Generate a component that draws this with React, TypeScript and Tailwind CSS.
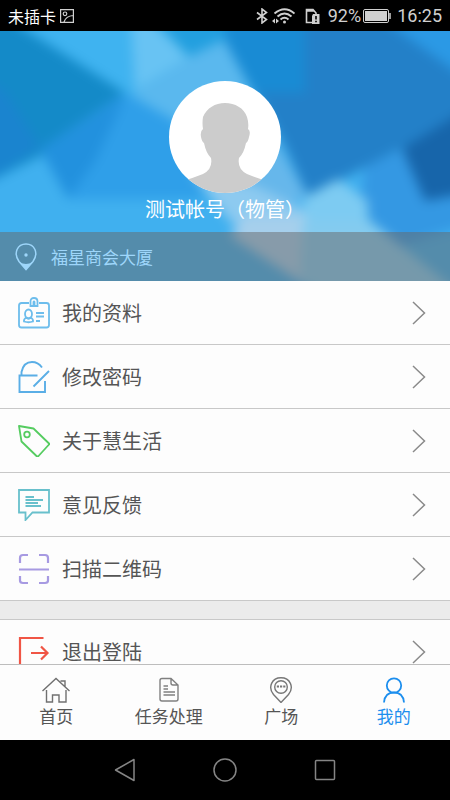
import { useState } from "react";
import type { ReactNode } from "react";

const icons: Record<string, ReactNode> = {
  profile: (
    <svg viewBox="0 0 32 32" className="size-8" fill="none" stroke="#6dbdec" strokeWidth="1.800">
      <path d="M11 6H3.500Q1 6 1 8.500V28Q1 30.500 3.500 30.500H28.500Q31 30.500 31 28V8.500Q31 6 28.500 6H21" />
      <path d="M12.500 9V4.500Q12.500 1 16 1T19.500 4.500V9ZM15.500 8V5Q16 4 16.500 5V8" />
      <ellipse cx="10.500" cy="17" rx="3.500" ry="4.500" />
      <path d="M8.500 20.500Q5.500 22 6 24.500Q10.500 26 15 24.500Q15.500 22 12.500 20.500Q10.500 22.500 8.500 20.500M18 16H26M18 19.500H26M18 24H22" />
    </svg>
  ),
  password: (
    <svg viewBox="0 0 32 32" className="size-8" fill="none" stroke="#5aaee6" strokeWidth="1.900">
      <path d="M19.500 14.500H1.500V31H27V20" />
      <path d="M3.500 14V11C5 4 9 1 14 1Q20 1 24 6.500M31 10L15.500 25.500" />
    </svg>
  ),
  about: (
    <svg viewBox="0 0 32 32" className="size-8" fill="none" stroke="#55cc60" strokeWidth="1.800" strokeLinejoin="round">
      <path d="M1 1L15.500 3.500L31 18.500Q31.500 19 31 19.500L20.500 31Q19.500 32 18.500 31L3.500 16.500Z" />
      <circle cx="9" cy="9.500" r="2.800" />
    </svg>
  ),
  feedback: (
    <svg viewBox="0 0 32 32" className="size-8" fill="none" stroke="#68c0cc" strokeWidth="1.800">
      <path d="M1 1H31V23.500H14.500L7.500 31V23.500H1Z" />
      <path d="M7.500 8H16M7.500 11H25M7.500 14H20M7.500 17H23" />
    </svg>
  ),
  scan: (
    <svg viewBox="0 0 32 32" className="size-8" fill="none" stroke="#a79ae2" strokeWidth="2.200">
      <path d="M2 10V5Q2 2 5 2H10M21 2H27Q30 2 30 5V10M2 23V27.500Q2 30 5 30H10M30 23V27.500Q30 30 27 30H21M1 16.500H31" />
    </svg>
  ),
  logout: (
    <svg viewBox="0 0 32 32" className="size-8" fill="none" stroke="#f05545" strokeWidth="2.200">
      <path d="M25.500 2H2V31H25.500M13 17H29M23 10.500L29.500 17L23 23.500" />
    </svg>
  ),
  home: (
    <svg viewBox="0 0 28 26" className="h-[26px] w-7" fill="none" stroke="#707070" strokeWidth="1.400">
      <path d="M0.500 14L14 1.500L27.500 14M4.500 13V25H10.500V18H17V25H24V13M18.500 4H23V9.500" />
    </svg>
  ),
  tasks: (
    <svg viewBox="0 0 28 26" className="h-[26px] w-7" fill="none" stroke="#808080" strokeWidth="1.400">
      <path d="M16 1.500H7Q5 1.500 5 3.500V22Q5 24 7 24H21Q23 24 23 22V8ZM16 1.500V6Q16 8 18 8H23M8.500 9H13M8.500 12H13M8.500 15H20M8.500 18H20" />
    </svg>
  ),
  square: (
    <svg viewBox="0 0 28 26" className="h-[26px] w-7" fill="none" stroke="#777777" strokeWidth="1.400">
      <path d="M14 25.500L6.500 17.500C0.500 10 5 0.800 14 0.800S27.500 10 21.500 17.500Z" />
      <circle cx="14" cy="10" r="6.300" />
      <path d="M9.800 9.500H12M13 9.500H15.200M16.200 9.500H18.400" strokeWidth="2" />
    </svg>
  ),
  mine: (
    <svg viewBox="0 0 28 26" className="h-[26px] w-7" fill="none" stroke="#1c8eee" strokeWidth="1.800">
      <circle cx="14" cy="8.500" r="7.200" />
      <path d="M4 25.500C4.500 19.500 8 15.500 14 15.500S23.500 19.500 24 25.500" />
    </svg>
  ),
};

const menuItems = [
  { id: "profile", label: "我的资料" },
  { id: "password", label: "修改密码" },
  { id: "about", label: "关于慧生活" },
  { id: "feedback", label: "意见反馈" },
  { id: "scan", label: "扫描二维码" },
];

const tabs = [
  { id: "home", label: "首页" },
  { id: "tasks", label: "任务处理" },
  { id: "square", label: "广场" },
  { id: "mine", label: "我的" },
];

function StatusBar() {
  return (
    <header className="flex h-[31px] shrink-0 items-center bg-black pl-2 pr-2 text-[#d0d0d0]">
      <span className="text-base text-white">未插卡</span>
      <svg viewBox="0 0 14 14" className="ml-1 size-3.5" fill="none" stroke="currentColor" strokeWidth="1.200">
        <path d="M0.600 0.600H13.400V13.400H0.600ZM4 13Q6 7 13 6.500" />
        <circle cx="5" cy="4.800" r="1.800" />
      </svg>
      <div className="ml-auto flex items-center">
        <svg viewBox="0 0 12 16" className="h-4 w-3" fill="none" stroke="currentColor" strokeWidth="1.600">
          <path d="M1 4.500L10.500 11.500L6 15V1L10.500 4.500L1 11.500" />
        </svg>
        <svg viewBox="0 0 23 16" className="ml-1 h-4 w-[23px]" fill="none" stroke="currentColor" strokeWidth="1.900">
          <path d="M2.500 5.500Q12.500 -3 22.500 5.500M5.500 8.500Q12.500 2.500 19.500 8.500M8.500 11.500Q12.500 8 16.500 11.500" />
          <circle cx="12.500" cy="14" r="1.500" fill="currentColor" stroke="none" />
          <path d="M0 13L3 10.500V15.500ZM7 13L4 10.500V15.500Z" fill="currentColor" stroke="none" />
        </svg>
        <svg viewBox="0 0 15 16" className="ml-2.5 h-4 w-[15px]" fill="none" stroke="currentColor" strokeWidth="1.600">
          <path d="M7 14.500H1.500V1.500H8L11 5V6M1 3H9" />
          <path d="M8 6H14.500V16H7V8Z" fill="currentColor" stroke="none" />
          <path d="M11 8V11.500M11 12.700V14.200" stroke="black" />
        </svg>
        <span className="ml-2 font-['Roboto',sans-serif] text-lg leading-none">92%</span>
        <svg viewBox="0 0 28 14" className="ml-0.5 h-3.5 w-7" fill="none" stroke="currentColor">
          <rect x="0.500" y="0.500" width="25" height="13" rx="1.500" />
          <rect x="2" y="2" width="22" height="10" fill="currentColor" stroke="none" />
          <path d="M27 4V10" strokeWidth="1.500" />
        </svg>
        <span className="ml-1.5 font-['Roboto',sans-serif] text-lg leading-none">16:25</span>
      </div>
    </header>
  );
}

function HeroBackground() {
  return (
    <svg
      viewBox="0 0 450 250"
      preserveAspectRatio="none"
      className="absolute inset-0 size-full"
      aria-hidden="true"
    >
      <defs>
        <filter id="soften" x="-10%" y="-10%" width="120%" height="120%" colorInterpolationFilters="sRGB">
          <feGaussianBlur stdDeviation="6" />
        </filter>
      </defs>
      <rect width="450" height="250" fill="#40b0ef" />
      <g filter="url(#soften)">
        <rect x="-30" y="-30" width="510" height="310" fill="#40b0ef" />
        <path d="M-30 -30H20L125 62L110 90L60 115L-30 160Z" fill="#148ac8" />
        <path d="M-30 40L5 60L40 116L-30 162Z" fill="#1a84cf" />
        <path d="M15 -8V-30H132V66Z" fill="#3fb3f0" />
        <path d="M130 -30L190 25L135 60Z" fill="#68c3f3" />
        <path d="M135 -30H235V15L190 27Z" fill="#229fdf" />
        <path d="M190 25L225 8L255 62L220 100L175 90L132 64Z" fill="#5ab8ee" />
        <path d="M125 62L175 90L205 168H70L40 118L60 105Z" fill="#2f9fe9" />
        <path d="M40 118L125 66L95 130L68 168Z" fill="#2291de" />
        <path d="M225 -30H307V65H255L225 10Z" fill="#198bd4" />
        <path d="M305 -30H385L480 55V90L400 118L365 136L308 166L285 115L255 62H305Z" fill="#2380c8" />
        <path d="M378 -15V-30H480V58Z" fill="#2b99e5" />
        <path d="M480 70L402 118L425 172L480 165Z" fill="#1765aa" />
        <path d="M365 136L402 118L425 170L480 160V190L400 215L360 180Z" fill="#3498e3" />
        <path d="M275 110L308 166L250 185L190 140Z" fill="#66b7eb" />
        <path d="M190 140L255 155L308 180V240L230 190Z" fill="#8dcaf0" />
        <path d="M305 166L338 148L368 170V205H300Z" fill="#7dcbf2" />
        <path d="M245 185H307V255L230 205Z" fill="#a6cfec" />
        <path d="M303 190H370L470 270V290H340L300 245Z" fill="#84cbef" />
      </g>
    </svg>
  );
}

function MenuRow({ icon, label }: { icon: string; label: string }) {
  return (
    <button
      type="button"
      className="flex h-16 w-full items-center border-b border-[#c8c8c8] bg-[#fdfdfd] pl-[18px] pr-6 text-left"
    >
      {icons[icon]}
      <span className="ml-3 text-xl text-[#555555]">{label}</span>
      <svg viewBox="0 0 14 24" className="ml-auto h-6 w-3.5" fill="none" stroke="#8a8a8a" strokeWidth="1.500">
        <path d="M1 1L12.500 12L1 23" />
      </svg>
    </button>
  );
}

export default function App() {
  const [activeTab, setActiveTab] = useState("mine");

  return (
    <div className="flex h-screen flex-col overflow-hidden bg-[#ebebeb] font-['Noto_Sans_CJK_SC',sans-serif]">
      <StatusBar />

      <main className="min-h-0 flex-1 overflow-hidden">
        <section className="relative flex h-[250px] flex-col overflow-hidden">
          <HeroBackground />
          <div className="relative flex flex-1 flex-col items-center pt-[50px]">
            <svg viewBox="0 0 112 112" className="size-28 shrink-0 rounded-full" role="img" aria-label="头像">
              <rect width="112" height="112" fill="white" />
              <path
                d="M56 22C66 22 75 27 78 36Q80 42 79 48Q82 50 80 56Q79 61 77 62Q75 72 70 77Q68 88 78 93Q88 97 101 101V112H11V101Q24 97 34 93Q44 88 42 77Q37 72 35 62Q33 61 32 56Q31 50 34 48Q33 42 34 36C38 27 46 22 56 22Z"
                fill="#cccccc"
              />
            </svg>
            <h1 className="text-xl leading-8 text-white">测试帐号（物管）</h1>
          </div>
          <div className="relative flex h-[49px] shrink-0 items-center bg-[#686868]/50 pl-[15px] text-[#9ed6fa]">
            <svg viewBox="0 0 22 28" className="h-7 w-[22px]" fill="none" stroke="currentColor" strokeWidth="1.500">
              <path d="M11 26.500L4 18.500C-2 10 2.500 1 11 1S24 10 18 18.500Z" />
              <path d="M4.500 19Q11 23 17.500 19L11 27Z" fill="currentColor" stroke="none" />
              <circle cx="11" cy="12" r="1.700" fill="currentColor" stroke="none" />
            </svg>
            <span className="ml-3.5 text-[17px]">福星商会大厦</span>
          </div>
        </section>

        {menuItems.map((item) => (
          <MenuRow key={item.id} icon={item.id} label={item.label} />
        ))}

        <div className="mt-[18px] border-t border-[#c8c8c8]">
          <MenuRow icon="logout" label="退出登陆" />
        </div>
      </main>

      <nav className="grid h-[76px] shrink-0 grid-cols-4 border-t border-[#bdbdbd] bg-[#fdfdfd]">
        {tabs.map((tab) => (
          <button
            key={tab.id}
            type="button"
            onClick={() => setActiveTab(tab.id)}
            className={`flex flex-col items-center pt-3 text-[17px] leading-[26px] ${
              activeTab === tab.id ? "text-[#1c8eee]" : "text-[#555555]"
            }`}
          >
            {icons[tab.id]}
            <span>{tab.label}</span>
          </button>
        ))}
      </nav>

      {/* Android navigation keys */}
      <footer className="flex h-[60px] shrink-0 items-center justify-center gap-[76px] bg-black text-[#858585]">
        <button type="button" aria-label="返回">
          <svg viewBox="0 0 24 24" className="size-6" fill="none" stroke="currentColor" strokeWidth="1.500" strokeLinejoin="round">
            <path d="M2.500 12L21 1.500V22.500Z" />
          </svg>
        </button>
        <button type="button" aria-label="主页">
          <svg viewBox="0 0 24 24" className="size-6" fill="none" stroke="currentColor" strokeWidth="1.500">
            <circle cx="12" cy="12" r="11" />
          </svg>
        </button>
        <button type="button" aria-label="最近任务">
          <svg viewBox="0 0 24 24" className="size-6" fill="none" stroke="currentColor" strokeWidth="1.500">
            <rect x="2.500" y="2.500" width="19" height="19" rx="1" />
          </svg>
        </button>
      </footer>
    </div>
  );
}
